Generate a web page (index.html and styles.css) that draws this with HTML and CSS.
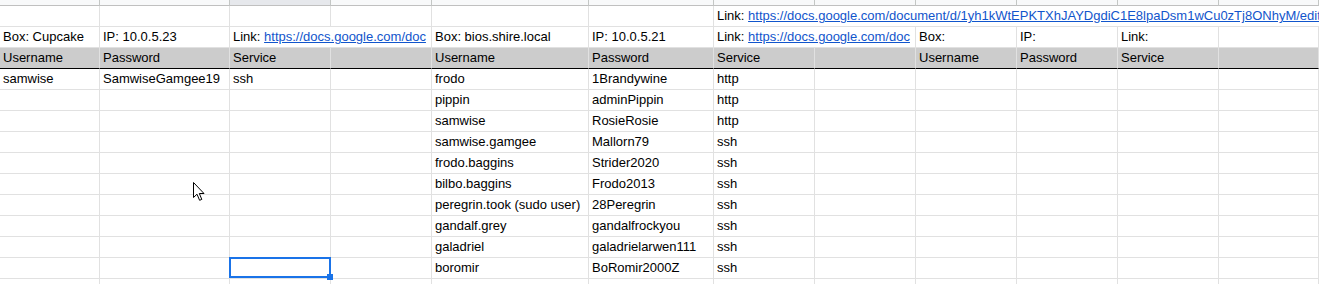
FILE: index.html
```html
<!DOCTYPE html>
<html lang="en">
<head>
<meta charset="utf-8">
<title>Sheet</title>
<link rel="stylesheet" href="styles.css">
</head>
<body>
<div class="sheet">
  <div class="colheads">
    <div class="ch"></div><div class="ch"></div><div class="ch active"></div><div class="ch"></div>
    <div class="ch"></div><div class="ch"></div><div class="ch"></div><div class="ch"></div>
    <div class="ch"></div><div class="ch"></div><div class="ch"></div><div class="ch"></div>
  </div>
  <div class="grid">
    <!-- row 1 -->
    <div class="c"></div><div class="c"></div><div class="c"></div><div class="c"></div><div class="c"></div><div class="c"></div>
    <div class="c span6 noright">Link: <a class="lnk">https://docs.google.com/document/d/1yh1kWtEPKTXhJAYDgdiC1E8lpaDsm1wCu0zTj8ONhyM/edit</a></div>
    <!-- row 2 -->
    <div class="c">Box: Cupcake</div><div class="c">IP: 10.0.5.23</div>
    <div class="c span2">Link: <a class="lnk">https://docs.google.com/doc</a></div>
    <div class="c">Box: bios.shire.local</div><div class="c">IP: 10.0.5.21</div>
    <div class="c span2">Link: <a class="lnk">https://docs.google.com/doc</a></div>
    <div class="c">Box:</div><div class="c">IP:</div><div class="c">Link:</div><div class="c"></div>
    <!-- header row -->
    <div class="c h">Username</div><div class="c h">Password</div><div class="c h">Service</div><div class="c h"></div>
    <div class="c h">Username</div><div class="c h">Password</div><div class="c h">Service</div><div class="c h"></div>
    <div class="c h">Username</div><div class="c h">Password</div><div class="c h">Service</div><div class="c h"></div>
    <!-- data rows -->
    <div class="c">samwise</div><div class="c">SamwiseGamgee19</div><div class="c">ssh</div><div class="c"></div>
    <div class="c">frodo</div><div class="c">1Brandywine</div><div class="c">http</div><div class="c"></div>
    <div class="c"></div><div class="c"></div><div class="c"></div><div class="c"></div>

    <div class="c"></div><div class="c"></div><div class="c"></div><div class="c"></div>
    <div class="c">pippin</div><div class="c">adminPippin</div><div class="c">http</div><div class="c"></div>
    <div class="c"></div><div class="c"></div><div class="c"></div><div class="c"></div>

    <div class="c"></div><div class="c"></div><div class="c"></div><div class="c"></div>
    <div class="c">samwise</div><div class="c">RosieRosie</div><div class="c">http</div><div class="c"></div>
    <div class="c"></div><div class="c"></div><div class="c"></div><div class="c"></div>

    <div class="c"></div><div class="c"></div><div class="c"></div><div class="c"></div>
    <div class="c">samwise.gamgee</div><div class="c">Mallorn79</div><div class="c">ssh</div><div class="c"></div>
    <div class="c"></div><div class="c"></div><div class="c"></div><div class="c"></div>

    <div class="c"></div><div class="c"></div><div class="c"></div><div class="c"></div>
    <div class="c">frodo.baggins</div><div class="c">Strider2020</div><div class="c">ssh</div><div class="c"></div>
    <div class="c"></div><div class="c"></div><div class="c"></div><div class="c"></div>

    <div class="c"></div><div class="c"></div><div class="c"></div><div class="c"></div>
    <div class="c">bilbo.baggins</div><div class="c">Frodo2013</div><div class="c">ssh</div><div class="c"></div>
    <div class="c"></div><div class="c"></div><div class="c"></div><div class="c"></div>

    <div class="c"></div><div class="c"></div><div class="c"></div><div class="c"></div>
    <div class="c">peregrin.took (sudo user)</div><div class="c">28Peregrin</div><div class="c">ssh</div><div class="c"></div>
    <div class="c"></div><div class="c"></div><div class="c"></div><div class="c"></div>

    <div class="c"></div><div class="c"></div><div class="c"></div><div class="c"></div>
    <div class="c">gandalf.grey</div><div class="c">gandalfrockyou</div><div class="c">ssh</div><div class="c"></div>
    <div class="c"></div><div class="c"></div><div class="c"></div><div class="c"></div>

    <div class="c"></div><div class="c"></div><div class="c"></div><div class="c"></div>
    <div class="c">galadriel</div><div class="c">galadrielarwen111</div><div class="c">ssh</div><div class="c"></div>
    <div class="c"></div><div class="c"></div><div class="c"></div><div class="c"></div>

    <div class="c"></div><div class="c"></div><div class="c sel"><span class="handle"></span></div><div class="c"></div>
    <div class="c">boromir</div><div class="c">BoRomir2000Z</div><div class="c">ssh</div><div class="c"></div>
    <div class="c"></div><div class="c"></div><div class="c"></div><div class="c"></div>

    <div class="c"></div><div class="c"></div><div class="c"></div><div class="c"></div>
    <div class="c"></div><div class="c"></div><div class="c"></div><div class="c"></div>
    <div class="c"></div><div class="c"></div><div class="c"></div><div class="c"></div>
  </div>
  <svg class="cursor" width="13" height="20" viewBox="0 0 13 20">
    <path d="M0.5 0.5 L0.5 15.5 L4 12.2 L6.6 18.3 L8.8 17.4 L6.3 11.5 L11 11.5 Z" fill="#ffffff" stroke="#000000" stroke-width="1" stroke-linejoin="miter"/>
  </svg>
</div>
</body>
</html>
```
FILE: styles.css
```css
html, body {
  margin: 0;
  padding: 0;
  background: #ffffff;
  overflow: hidden;
}

.sheet {
  position: relative;
  width: 1319px;
  height: 284px;
  overflow: hidden;
  font-family: "Liberation Sans", Arial, sans-serif;
  font-size: 13px;
  color: #000000;
}

.colheads,
.grid {
  display: grid;
  grid-template-columns: 100px 130px 101px 101px 157px 125px 101px 101px 101px 101px 101px 100px;
}

.ch {
  height: 6px;
  box-sizing: border-box;
  background: #f8f9fa;
  border-right: 1px solid #c4c7c5;
  border-bottom: 1px solid #c0c0c0;
}

.ch.active {
  background: #e6e8ec;
}

.c {
  height: 21px;
  box-sizing: border-box;
  border-right: 1px solid #e1e1e1;
  border-bottom: 1px solid #e1e1e1;
  padding: 0 3px;
  line-height: 20px;
  white-space: nowrap;
  overflow: hidden;
}

.span2 {
  grid-column: span 2;
  padding-right: 0;
}

.span6 {
  grid-column: span 6;
  padding-right: 0;
}

.noright {
  border-right: none;
}

.lnk {
  color: #1155cc;
  text-decoration: underline;
}

.h {
  background: #cccccc;
  border-bottom: 1px solid #000000;
}

.sel {
  position: relative;
  overflow: visible;
}

.sel::after {
  content: "";
  position: absolute;
  left: -1px;
  top: -1px;
  width: 102px;
  height: 21px;
  box-sizing: border-box;
  border: 2px solid #1a73e8;
}

.handle {
  position: absolute;
  left: 97px;
  top: 16px;
  width: 6px;
  height: 6px;
  background: #1a73e8;
  z-index: 2;
}

.cursor {
  position: absolute;
  left: 193px;
  top: 182px;
}
```
